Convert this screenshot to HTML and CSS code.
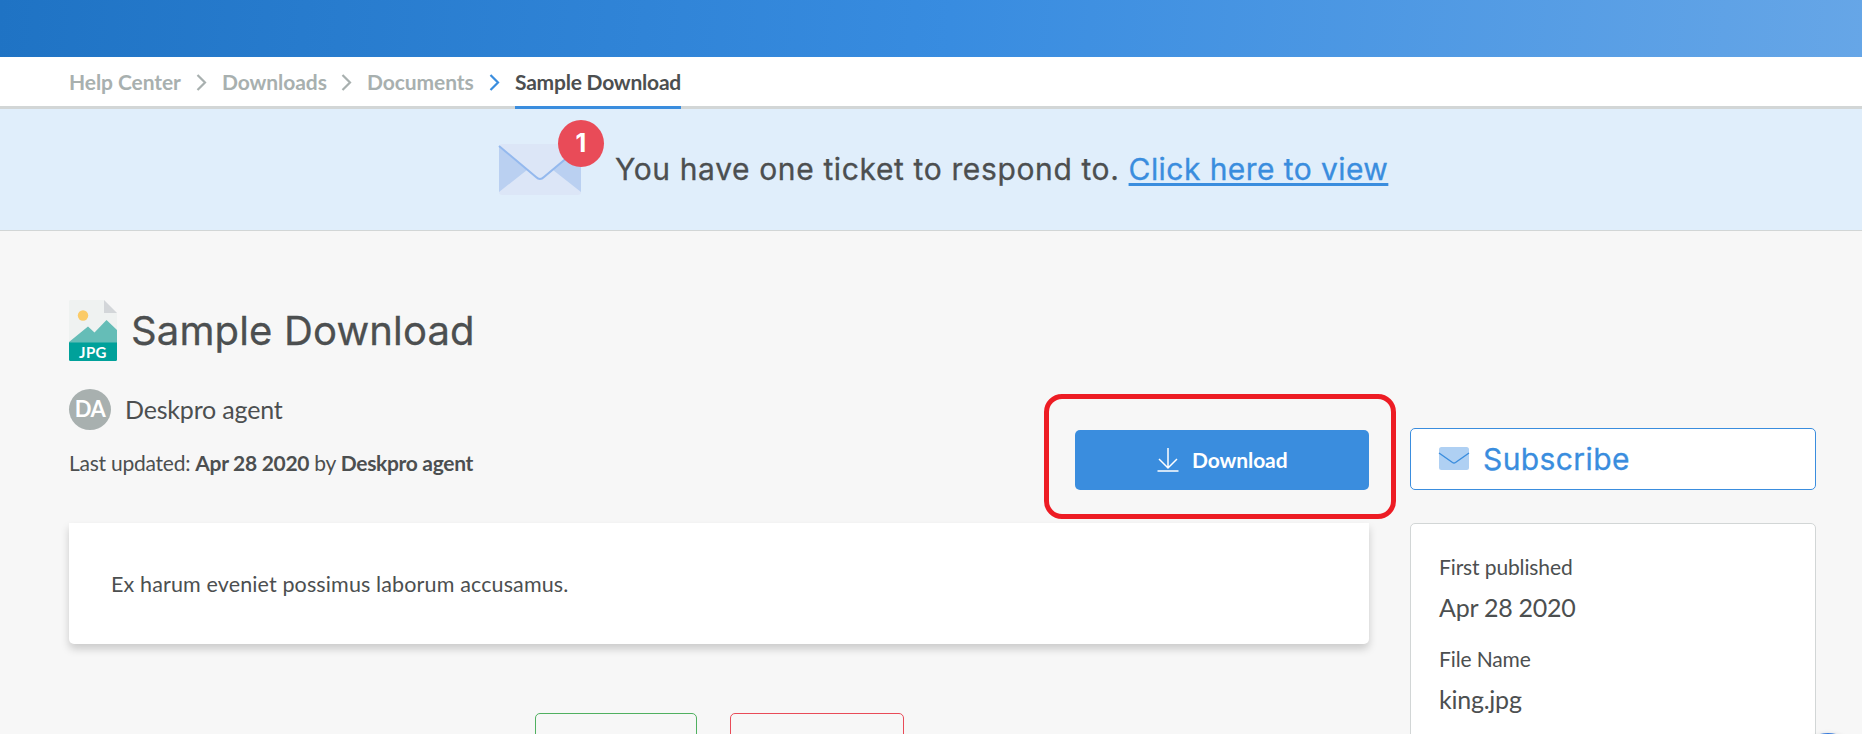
FILE: index.html
```html
<!DOCTYPE html>
<html lang="en">
<head>
<meta charset="utf-8">
<title>Sample Download</title>
<link rel="stylesheet" href="styles.css">
</head>
<body>
<header class="topbar"></header>
<nav class="crumbs">
  <a class="crumb c1">Help Center</a>
  <svg class="chev" viewBox="0 0 12 22"><path d="M2.500 4 10 11.500 2.500 19"/></svg>
  <a class="crumb c2">Downloads</a>
  <svg class="chev" viewBox="0 0 12 22"><path d="M2.500 4 10 11.500 2.500 19"/></svg>
  <a class="crumb c3">Documents</a>
  <svg class="chev chev-active" viewBox="0 0 12 22"><path d="M2.500 4 10 11.500 2.500 19"/></svg>
  <a class="crumb crumb-active">Sample Download</a>
</nav>
<section class="notice">
  <div class="mail">
    <svg class="mail-icon" viewBox="0 0 82 51">
      <rect width="82" height="51" rx="3" fill="#dce6f7"/>
      <path d="M0 2 28 26 0 48zM82 2 54 26 82 48z" fill="#bad0f1"/>
      <path d="M0 2 37 33Q41 37 45 33L82 2" fill="none" stroke="#94b9ee" stroke-width="2"/>
    </svg>
    <span class="badge">1</span>
  </div>
  <p class="notice-text">You have one ticket to respond to. <a class="notice-link">Click here to view</a></p>
</section>
<div class="page">
  <main class="main">
    <div class="heading">
      <svg class="file-icon" viewBox="0 0 48 61">
        <path d="M1 0H35L48 13V61H0V1z" fill="#eff2f1"/>
        <path d="M35 0 48 13H35z" fill="#d3d6d9"/>
        <circle cx="14" cy="15.500" r="5.200" fill="#fbcb67"/>
        <path d="M0 42 19 26.500 25.500 32.500 37.500 20 48 30V43H0z" fill="#65bdb7"/>
        <path d="M0 42.500H48V59.500Q48 61 46.500 61H1.500Q0 61 0 59.500z" fill="#00a19a"/>
        <text x="10" y="57.500" class="file-ext" textLength="27.500">JPG</text>
      </svg>
      <h1 class="title">Sample Download</h1>
    </div>
    <div class="meta">
      <div>
        <div class="author"><span class="avatar">DA</span><span class="author-name">Deskpro agent</span></div>
        <p class="updated">Last updated: <b>Apr 28 2020</b> by <b>Deskpro agent</b></p>
      </div>
      <div class="download-wrap">
        <button class="download">
          <svg class="dl-icon" viewBox="0 0 22 25"><path d="M11 0V20M2 11 11 20 20 11M0.500 23H21.500"/></svg>
          <span class="dl-label">Download</span>
        </button>
        <span class="highlight"></span>
      </div>
    </div>
    <article class="card"><span class="card-text">Ex harum eveniet possimus laborum accusamus.</span></article>
    <div class="votes"><span class="vote vote-up"></span><span class="vote vote-down"></span></div>
  </main>
  <aside class="side">
    <button class="subscribe">
      <svg class="sub-icon" viewBox="0 0 30 23"><rect width="30" height="23" rx="2.500" fill="#afd0f3"/><path d="M0 6 13.500 15.500Q15 16.500 16.500 15.500L30 6" fill="none" stroke="#3a8dde" stroke-width="1.400"/></svg>
      <span class="sub-label">Subscribe</span>
    </button>
    <dl class="info">
      <dt>First published</dt><dd>Apr 28 2020</dd>
      <dt class="t2">File Name</dt><dd>king.jpg</dd>
    </dl>
  </aside>
</div>
<span class="chat"></span>
</body>
</html>
```
FILE: styles.css
```css
* { box-sizing: border-box; }
html, body { margin: 0; height: 734px; overflow: hidden; }
body { position: relative; background: #f7f7f7; color: #4c4f50; font-family: Lato, sans-serif; font-size: 21px; }
p, h1, dl, dd { margin: 0; }
button { font: inherit; padding: 0; border: 0; }
svg { display: block; flex: none; overflow: visible; }
.topbar { height: 57px; background: linear-gradient(95deg, #1f73c4 0%, #388ce0 51%, #66a6e7 100%); }
.crumbs { height: 52px; padding-left: 69px; display: flex; background: #fff; border-bottom: 3px solid #d2d6d6; }
.crumb { height: 52px; line-height: 49px; font-weight: 700; color: #a8b0af; white-space: nowrap; letter-spacing: -.08px; }
.c1 { width: 126px; }
.c2 { width: 118px; }
.c3 { width: 121px; }
.crumb-active { color: #4c4f50; width: 166px; border-bottom: 3px solid #3a8dde; letter-spacing: -.22px; }
.chev { width: 12px; height: 22px; margin: 14px 15px 0 0; fill: none; stroke: #a8b0af; stroke-width: 2.200; }
.chev-active { stroke: #3a8dde; }
.notice { height: 122px; padding-left: 499px; display: flex; background: #e0eefb; border-bottom: 1px solid #d2d6d6; }
.mail { position: relative; width: 116px; padding-top: 35px; }
.mail-icon { width: 82px; height: 51px; }
.badge { position: absolute; left: 59px; top: 11px; width: 46px; height: 47px; border-radius: 50%; background: #e94b58; color: #fff; font: 700 25px/47px Inter, sans-serif; text-align: center; }
.notice-text { font-family: Inter, sans-serif; font-size: 30px; line-height: 36px; padding-top: 42px; white-space: nowrap; letter-spacing: .63px; -webkit-text-stroke: .3px; }
.notice-link { color: #3a8dde; letter-spacing: .43px; text-decoration: underline; text-decoration-thickness: 3px; text-underline-offset: 3px; text-decoration-skip-ink: none; }
.page { display: flex; gap: 41px; padding-left: 69px; }
.main { width: 1300px; padding-top: 69px; }
.heading { display: flex; gap: 14px; height: 61px; }
.file-icon { width: 48px; height: 61px; }
.file-ext { font: 700 15px Lato, sans-serif; fill: #fff; }
.title { font: 400 40px/61px Inter, sans-serif; white-space: nowrap; letter-spacing: .15px; -webkit-text-stroke: .3px; }
.meta { display: flex; justify-content: space-between; height: 162px; padding-top: 28px; }
.author { display: flex; gap: 14px; height: 41px; }
.avatar { width: 42px; height: 41px; border-radius: 50%; background: #a8b0af; color: #fff; font-weight: 700; font-size: 22px; letter-spacing: -.6px; line-height: 39px; text-align: center; }
.author-name { font-size: 25px; line-height: 40px; letter-spacing: -.18px; }
.updated { line-height: 26px; margin-top: 20px; white-space: nowrap; letter-spacing: -.24px; }
.updated b { letter-spacing: -.31px; }
.download-wrap { position: relative; width: 294px; padding-top: 41px; }
.download { width: 294px; height: 60px; border-radius: 5px; background: #3a8dde; color: #fff; display: flex; padding: 18px 0 0 82px; gap: 13px; text-align: left; }
.dl-icon { width: 22px; height: 25px; fill: none; stroke: #fff; stroke-width: 1.500; }
.dl-label { font-weight: 700; line-height: 23px; letter-spacing: -.1px; }
.highlight { position: absolute; left: -31px; top: 5px; width: 352px; height: 125px; border: 5px solid #ed1c24; border-radius: 18px; }
.card { height: 121px; background: #fff; border-radius: 0 0 5px 5px; box-shadow: 0 5px 8px rgba(0,0,0,.18); padding-left: 42px; line-height: 122px; }
.card-text { font-size: 21.500px; letter-spacing: .13px; }
.votes { display: flex; gap: 33px; padding: 69px 0 0 466px; }
.vote { height: 60px; border: 1px solid #50b060; border-radius: 5px; }
.vote-up { width: 162px; }
.vote-down { width: 174px; border-color: #e94b58; }
.side { width: 406px; padding-top: 197px; }
.subscribe { width: 406px; height: 62px; border: 1px solid #3a8dde; border-radius: 5px; background: #fff; color: #3a8dde; display: flex; padding: 18px 0 0 28px; gap: 14px; }
.sub-icon { width: 30px; height: 23px; }
.sub-label { font: 400 30px/36px Inter, sans-serif; margin-top: -6px; letter-spacing: .4px; -webkit-text-stroke: .3px; }
.info { height: 300px; margin-top: 33px; padding: 29px 28px; background: #fff; border: 1px solid #d2d6d6; border-radius: 5px; }
.info dt { line-height: 28px; letter-spacing: -.12px; }
.info dd { font-size: 25px; line-height: 34px; margin-top: 9px; letter-spacing: -.24px; }
.info .t2 { margin-top: 21px; }
.chat { position: absolute; left: 1796px; top: 733px; width: 64px; height: 64px; border-radius: 50%; background: #3a7ddd; box-shadow: 0 1px 5px rgba(0,0,0,.14); }
```
